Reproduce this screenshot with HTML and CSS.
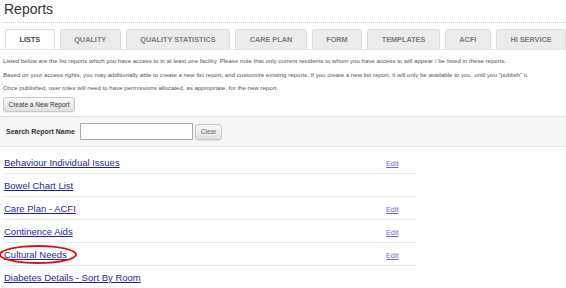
FILE: index.html
```html
<!DOCTYPE html>
<html lang="en">
<head>
  <meta charset="UTF-8">
  <title>Reports</title>
  <link rel="stylesheet" href="styles.css">
</head>
<body>
  <h1 class="title">Reports</h1>

  <ul class="tabs">
    <li class="tab active">Lists</li>
    <li class="tab">Quality</li>
    <li class="tab">Quality Statistics</li>
    <li class="tab">Care Plan</li>
    <li class="tab">Form</li>
    <li class="tab">Templates</li>
    <li class="tab">ACFI</li>
    <li class="tab">HI Service</li>
  </ul>

  <p class="intro">
    Listed below are the list reports which you have access to in at least one facility. Please note that only current residents to whom you have access to will appear / be listed in these reports.<br>
    Based on your access rights, you may additionally able to create a new list report, and customize existing reports. If you create a new list report, it will only be available to you, until you "publish" it.<br>
    Once published, user roles will need to have permissions allocated, as appropriate, for the new report.
  </p>

  <button class="btn create">Create a New Report</button>

  <div class="search">
    <label class="search-label" for="search">Search Report Name</label>
    <input class="search-input" id="search" type="text">
    <button class="btn clear">Clear</button>
  </div>

  <table class="reports">
    <tr>
      <td class="name"><a href="#">Behaviour Individual Issues</a></td>
      <td class="edit"><a href="#">Edit</a></td>
    </tr>
    <tr>
      <td class="name"><a href="#">Bowel Chart List</a></td>
      <td class="edit"></td>
    </tr>
    <tr>
      <td class="name"><a href="#">Care Plan - ACFI</a></td>
      <td class="edit"><a href="#">Edit</a></td>
    </tr>
    <tr>
      <td class="name"><a href="#">Continence Aids</a></td>
      <td class="edit"><a href="#">Edit</a></td>
    </tr>
    <tr>
      <td class="name"><a href="#">Cultural Needs</a><span class="mark"></span></td>
      <td class="edit"><a href="#">Edit</a></td>
    </tr>
    <tr>
      <td class="name"><a href="#">Diabetes Details - Sort By Room</a></td>
      <td class="edit"></td>
    </tr>
  </table>
</body>
</html>
```

FILE: styles.css
```css
* {
  margin: 0;
  padding: 0;
  box-sizing: border-box;
}

body {
  font-family: 'Liberation Sans', Arial, sans-serif;
  color: #555;
  background: #fff;
  overflow: hidden;
}

.title {
  font-size: 14px;
  font-weight: normal;
  color: #333;
  line-height: 18px;
  margin-left: 3px;
  padding: 0 0 4px 1px;
  border-bottom: 1px dotted #ccc;
}

.tabs {
  display: flex;
  gap: 5px;
  list-style: none;
  margin-top: 6px;
  padding-left: 5px;
  border-bottom: 1px solid #e6e6e6;
}

.tab {
  height: 20px;
  line-height: 19px;
  padding: 0 13.5px;
  border: 1px solid #ddd;
  border-bottom: none;
  border-radius: 3px 3px 0 0;
  background: #ececec;
  font-size: 7.3px;
  font-weight: bold;
  color: #7a7a7a;
  text-transform: uppercase;
  white-space: nowrap;
}

.tab.active {
  background: #fff;
  color: #444;
}

.intro {
  margin: 4px 0 0 3px;
  font-size: 6.1px;
  line-height: 13.5px;
  white-space: nowrap;
}

.btn {
  font-family: inherit;
  font-size: 6.5px;
  color: #333;
  height: 15px;
  padding: 0 4.5px;
  border: 1px solid #c6c6c6;
  border-radius: 3px;
  background: linear-gradient(#f9f9f9, #e0e0e0);
  box-shadow: 0 1px 1px rgba(0, 0, 0, 0.08);
}

.create {
  display: block;
  margin: 2.5px 0 0 3px;
}

.search {
  display: flex;
  align-items: center;
  height: 31px;
  margin-top: 4px;
  padding-left: 6px;
  background: #f6f6f6;
  border-top: 1px solid #e2e2e2;
  border-bottom: 1px solid #e2e2e2;
}

.search-label {
  font-size: 7px;
  font-weight: bold;
  color: #333;
}

.search-input {
  width: 113px;
  height: 17px;
  margin-left: 5px;
  border: 1px solid #a9a9a9;
  background: #fff;
}

.clear {
  height: 16px;
  margin-left: 2px;
  padding: 0 5px;
  color: #666;
}

.reports {
  margin: 4px 0 0 1px;
  border-collapse: separate;
  border-spacing: 2px 0;
}

.reports td {
  height: 23px;
  padding: 0 0 3px 1px;
  border-bottom: 1px solid #e8e8e8;
  vertical-align: middle;
}

.name {
  width: 380px;
  position: relative;
}

.name a {
  font-size: 9.5px;
  color: #1f1fa3;
}

.edit {
  width: 32px;
}

.edit a {
  font-size: 7.3px;
  color: #7466d8;
}

.mark {
  position: absolute;
  left: -4px;
  top: 2px;
  width: 78px;
  height: 19px;
  border: 2px solid #e01010;
  border-radius: 50%;
}
```
